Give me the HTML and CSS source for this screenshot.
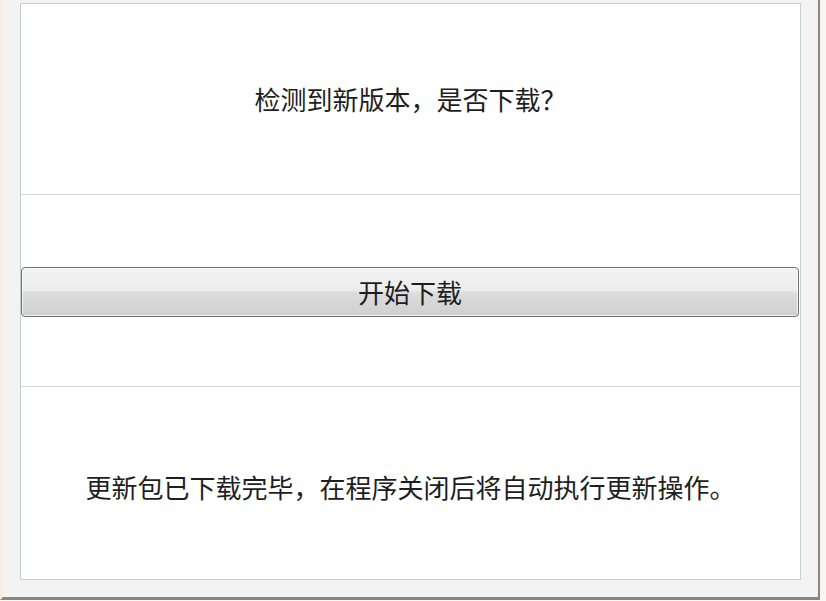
FILE: index.html
```html
<!DOCTYPE html>
<html lang="zh-CN">
<head>
    <meta charset="UTF-8">
    <meta name="viewport" content="width=device-width, initial-scale=1.0">
    <title>更新</title>
    <link rel="stylesheet" href="styles.css">
</head>
<body>
    <div class="frame">
        <div class="panel">
            <div class="row">
                <p class="msg">检测到新版本，是否下载？</p>
            </div>
            <div class="row">
                <button class="btn">开始下载</button>
            </div>
            <div class="row row-last">
                <p class="msg">更新包已下载完毕，在程序关闭后将自动执行更新操作。</p>
            </div>
        </div>
    </div>
</body>
</html>
```

FILE: styles.css
```css
html, body {
    margin: 0;
    padding: 0;
}
body {
    background-color: #f8f6f3;
    font-family: "Noto Sans CJK SC", "Noto Sans", sans-serif;
    color: #1e1e1e;
}
.frame {
    width: 820px;
    height: 600px;
    box-sizing: border-box;
    padding: 3px 17px 17px 17px;
    background-color: #f3f3f3;
    border-left: 3px solid #f4eee6;
    border-right: 2px solid #8d857c;
    border-bottom: 3px solid #8d857c;
}
.panel {
    height: 577px;
    box-sizing: border-box;
    border: 1px solid #c8cdd4;
    background-color: #fff;
    display: grid;
    grid-template-rows: 191px 192px 1fr;
}
.row {
    display: flex;
    align-items: center;
    justify-content: center;
    border-bottom: 1px solid #d2d5d9;
}
.row-last {
    border-bottom: none;
    padding-top: 8px;
}
.msg {
    margin: 0;
    font-size: 26px;
    line-height: 1;
}
.btn {
    width: 778px;
    height: 50px;
    margin: 2px 1px 0 0;
    border: 1px solid #707070;
    border-radius: 4px;
    background: linear-gradient(#f3f3f3 0%, #ececec 46%, #dcdcdc 52%, #cfcfcf 100%);
    box-shadow: inset 0 0 0 1px rgba(255, 255, 255, 0.7);
    font-family: "Noto Sans CJK SC", "Noto Sans", sans-serif;
    font-size: 26px;
    color: #1e1e1e;
    padding: 0;
    margin-left: 0;
}
```
